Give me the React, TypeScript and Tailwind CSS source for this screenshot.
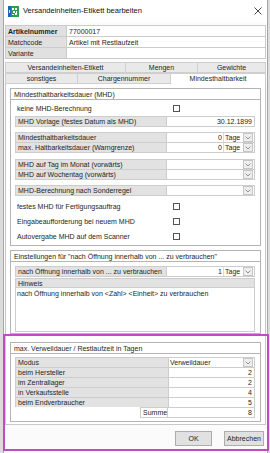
import React from "react";

const Chevron = () => (
  <svg width="6" height="4" viewBox="0 0 6 4">
    <path d="M0.6 0.6 L3 3 L5.4 0.6" fill="none" stroke="#7a7a7a" strokeWidth="0.8" />
  </svg>
);

function ArrowBtn() {
  return (
    <div className="w-[10px] h-[9px] border border-[#c6c6c6] bg-[#eeeeee] flex items-center justify-center shrink-0">
      <Chevron />
    </div>
  );
}

function Checkbox() {
  return <div className="w-[7px] h-[7px] border border-[#555555] bg-white" />;
}

function FieldRow({
  label,
  children,
  className = "",
}: {
  label: string;
  children?: React.ReactNode;
  className?: string;
}) {
  return (
    <div className={"flex h-[11px] " + className}>
      <div className="w-[152px] bg-[#e2e2e2] border border-[#cdcdcd] flex items-center px-[2px] whitespace-nowrap overflow-hidden">
        {label}
      </div>
      <div className="flex-1 border border-l-0 border-[#cdcdcd] bg-white flex items-center min-w-0">
        {children}
      </div>
    </div>
  );
}

function TageValue({ n }: { n: string }) {
  return (
    <>
      <div className="flex-1 text-right pr-[1px]">{n}</div>
      <div className="w-[31px] h-full flex items-center border-l border-[#dcdcdc]">
        <span className="pl-[1px]">Tage</span>
        <div className="ml-auto mr-[1px]">
          <ArrowBtn />
        </div>
      </div>
    </>
  );
}

function ComboValue() {
  return (
    <div className="ml-auto mr-[1px]">
      <ArrowBtn />
    </div>
  );
}

function CheckRow({ label }: { label: string }) {
  return (
    <div className="flex h-[10px] items-center">
      <div className="w-[158px] pl-[2px] whitespace-nowrap">{label}</div>
      <Checkbox />
    </div>
  );
}

function GroupHeader({ children }: { children: React.ReactNode }) {
  return (
    <div className="h-[12px] border border-[#b4b4b4] bg-white flex items-center px-[3px] whitespace-nowrap">
      {children}
    </div>
  );
}

function TitleIcon() {
  return (
    <svg width="11" height="11" viewBox="0 0 11 11">
      <rect x="0" y="0" width="11" height="11" fill="#2f9e4a" />
      <rect x="0" y="0" width="3" height="11" fill="#1f63b8" />
      <rect x="4" y="2" width="2" height="2" fill="#fff" />
      <rect x="7" y="2" width="2" height="2" fill="#fff" />
      <rect x="5" y="5" width="2" height="2" fill="#fff" />
      <rect x="8" y="5" width="1" height="2" fill="#fff" />
      <rect x="4" y="8" width="2" height="1" fill="#fff" />
      <rect x="7" y="7" width="2" height="2" fill="#fff" />
      <rect x="1" y="4" width="1" height="3" fill="#cfe3ff" />
    </svg>
  );
}

function Tab({
  label,
  w,
  selected = false,
}: {
  label: string;
  w: string;
  selected?: boolean;
}) {
  return (
    <div
      className={
        w +
        " h-[11px] flex justify-center whitespace-nowrap border border-[#cfcfcf] -ml-px first:ml-0 " +
        (selected ? "bg-white border-b-0 items-start pt-[1px]" : "bg-[#e9e9e9] items-center")
      }
    >
      {label}
    </div>
  );
}

export default function App() {
  return (
    <div className="w-[270px] h-[453px] overflow-hidden bg-[#dcdcdc] font-['Liberation_Sans',Arial,sans-serif] text-[7px] leading-none text-[#1e1e1e] relative">
      <div className="ml-[3px] w-[265px] h-[453px] bg-[#fbfbfb] border-l border-r border-[#a6a6a6] flex flex-col">
        {/* Title bar */}
        <div className="h-[22px] bg-white flex items-center shrink-0">
          <div className="ml-[4px]">
            <TitleIcon />
          </div>
          <div className="ml-[4px] text-[7.5px] text-[#111]">Versandeinheiten-Etikett bearbeiten</div>
          <div className="ml-auto mr-[5px]">
            <svg width="8" height="8" viewBox="0 0 8 8">
              <path d="M0.5 0.5 L7.5 7.5 M7.5 0.5 L0.5 7.5" stroke="#333" strokeWidth="0.9" />
            </svg>
          </div>
        </div>

        {/* Header grid */}
        <div className="mt-[3px] ml-[1px] mr-[1px] grid grid-cols-[60px_1fr] gap-px bg-[#cbcbcb] p-px shrink-0">
          <div className="h-[10px] bg-[#e0e0e0] flex items-center px-[2px] font-bold">Artikelnummer</div>
          <div className="h-[10px] bg-white flex items-center px-[2px]">77000017</div>
          <div className="h-[10px] bg-[#e0e0e0] flex items-center px-[2px]">Matchcode</div>
          <div className="h-[10px] bg-white flex items-center px-[2px]">Artikel mit Restlaufzeit</div>
          <div className="h-[10px] bg-[#e0e0e0] flex items-center px-[2px]">Variante</div>
          <div className="h-[10px] bg-white" />
        </div>

        {/* Tabs */}
        <div className="mt-[3px] ml-[1px] mr-[1px] flex flex-col shrink-0">
          <div className="flex">
            <Tab label="Versandeinheiten-Etikett" w="w-[121px]" />
            <Tab label="Mengen" w="w-[73px]" />
            <Tab label="Gewichte" w="flex-1" />
          </div>
          <div className="flex">
            <Tab label="sonstiges" w="w-[73px]" />
            <Tab label="Chargennummer" w="w-[94px]" />
            <Tab label="Mindesthaltbarkeit" w="flex-1" selected />
          </div>
        </div>

        {/* Tab panel */}
        <div className="ml-[1px] mr-[1px] h-[341px] border border-t-0 border-[#c8c8c8] bg-white flex flex-col px-[4px] pt-[4px] shrink-0">
          {/* Group 1 */}
          <GroupHeader>Mindesthaltbarkeitsdauer (MHD)</GroupHeader>
          <div className="h-[146px] border border-t-0 border-[#b4b4b4] pl-[4px] pr-[5px] flex flex-col">
            <div className="mt-[3px]">
              <CheckRow label="keine MHD-Berechnung" />
            </div>
            <FieldRow label="MHD Vorlage (festes Datum als MHD)" className="mt-[3px]">
              <span className="ml-auto pr-[2px]">30.12.1899</span>
            </FieldRow>
            <FieldRow label="Mindesthaltbarkeitsdauer" className="mt-[5px]">
              <TageValue n="0" />
            </FieldRow>
            <FieldRow label="max. Haltbarkeitsdauer (Warngrenze)" className="-mt-px">
              <TageValue n="0" />
            </FieldRow>
            <FieldRow label="MHD auf Tag im Monat (vorwärts)" className="mt-[6px]">
              <ComboValue />
            </FieldRow>
            <FieldRow label="MHD auf Wochentag (vorwärts)" className="-mt-px">
              <ComboValue />
            </FieldRow>
            <FieldRow label="MHD-Berechnung nach Sonderregel" className="mt-[5px]">
              <ComboValue />
            </FieldRow>
            <div className="mt-[5px] flex flex-col gap-[5px]">
              <CheckRow label="festes MHD für Fertigungsauftrag" />
              <CheckRow label="Eingabeaufforderung bei neuem MHD" />
              <CheckRow label="Autovergabe MHD auf dem Scanner" />
            </div>
          </div>

          {/* Group 2 */}
          <div className="mt-[4px]">
            <GroupHeader>Einstellungen für "nach Öffnung innerhalb von ... zu verbrauchen"</GroupHeader>
          </div>
          <div className="h-[72px] border border-t-0 border-[#b4b4b4] pl-[4px] pr-[5px] flex flex-col">
            <FieldRow label="nach Öffnung innerhalb von ... zu verbrauchen" className="mt-[4px]">
              <TageValue n="1" />
            </FieldRow>
            <div className="mt-[1px] h-[54px] border border-[#cdcdcd] bg-white flex flex-col">
              <div className="h-[9px] bg-[#e2e2e2] border-b border-[#cdcdcd] flex items-center px-[2px]">Hinweis</div>
              <div className="mt-[2px] px-[1px] whitespace-nowrap">
                nach Öffnung innerhalb von &lt;Zahl&gt; &lt;Einheit&gt; zu verbrauchen
              </div>
            </div>
          </div>

          {/* Group 3 */}
          <div className="mt-[8px]">
            <GroupHeader>max. Verweildauer / Restlaufzeit in Tagen</GroupHeader>
          </div>
          <div className="h-[68px] border border-t-0 border-[#b4b4b4] pl-[4px] pr-[5px] flex flex-col">
            <div className="mt-[3px] grid grid-cols-[152px_1fr] gap-px bg-[#cdcdcd] p-px">
              <div className="h-[9px] bg-[#e2e2e2] flex items-center px-[2px]">Modus</div>
              <div className="h-[9px] bg-white flex items-center pl-[1px]">
                <span>Verweildauer</span>
                <div className="ml-auto mr-[1px]">
                  <ArrowBtn />
                </div>
              </div>
              <div className="h-[9px] bg-[#e2e2e2] flex items-center px-[2px]">beim Hersteller</div>
              <div className="h-[9px] bg-white flex items-center justify-end pr-[2px]">2</div>
              <div className="h-[9px] bg-[#e2e2e2] flex items-center px-[2px]">im Zentrallager</div>
              <div className="h-[9px] bg-white flex items-center justify-end pr-[2px]">2</div>
              <div className="h-[9px] bg-[#e2e2e2] flex items-center px-[2px]">in Verkaufsstelle</div>
              <div className="h-[9px] bg-white flex items-center justify-end pr-[2px]">4</div>
              <div className="h-[9px] bg-[#e2e2e2] flex items-center px-[2px]">beim Endverbraucher</div>
              <div className="h-[9px] bg-white flex items-center justify-end pr-[2px]">5</div>
            </div>
            <div className="flex -mt-px h-[11px]">
              <div className="w-[125px] bg-white" />
              <div className="w-[28px] border border-[#cdcdcd] bg-white flex items-center px-[2px]">Summe</div>
              <div className="flex-1 border border-l-0 border-[#cdcdcd] bg-white flex items-center justify-end pr-[2px]">8</div>
            </div>
          </div>
        </div>

        {/* Buttons */}
        <div className="mt-[6px] flex justify-end gap-[12px] mr-[3px]">
          <div className="w-[37px] h-[15px] bg-[#e1e1e1] border border-[#adadad] flex items-center justify-center">OK</div>
          <div className="w-[40px] h-[15px] bg-[#e1e1e1] border border-[#adadad] flex items-center justify-center">Abbrechen</div>
        </div>
      </div>

      {/* Magenta highlight overlay */}
      <div className="absolute left-[3px] top-[334px] w-[266px] h-[117px] border-2 border-[#c04cc4] pointer-events-none" />
    </div>
  );
}
